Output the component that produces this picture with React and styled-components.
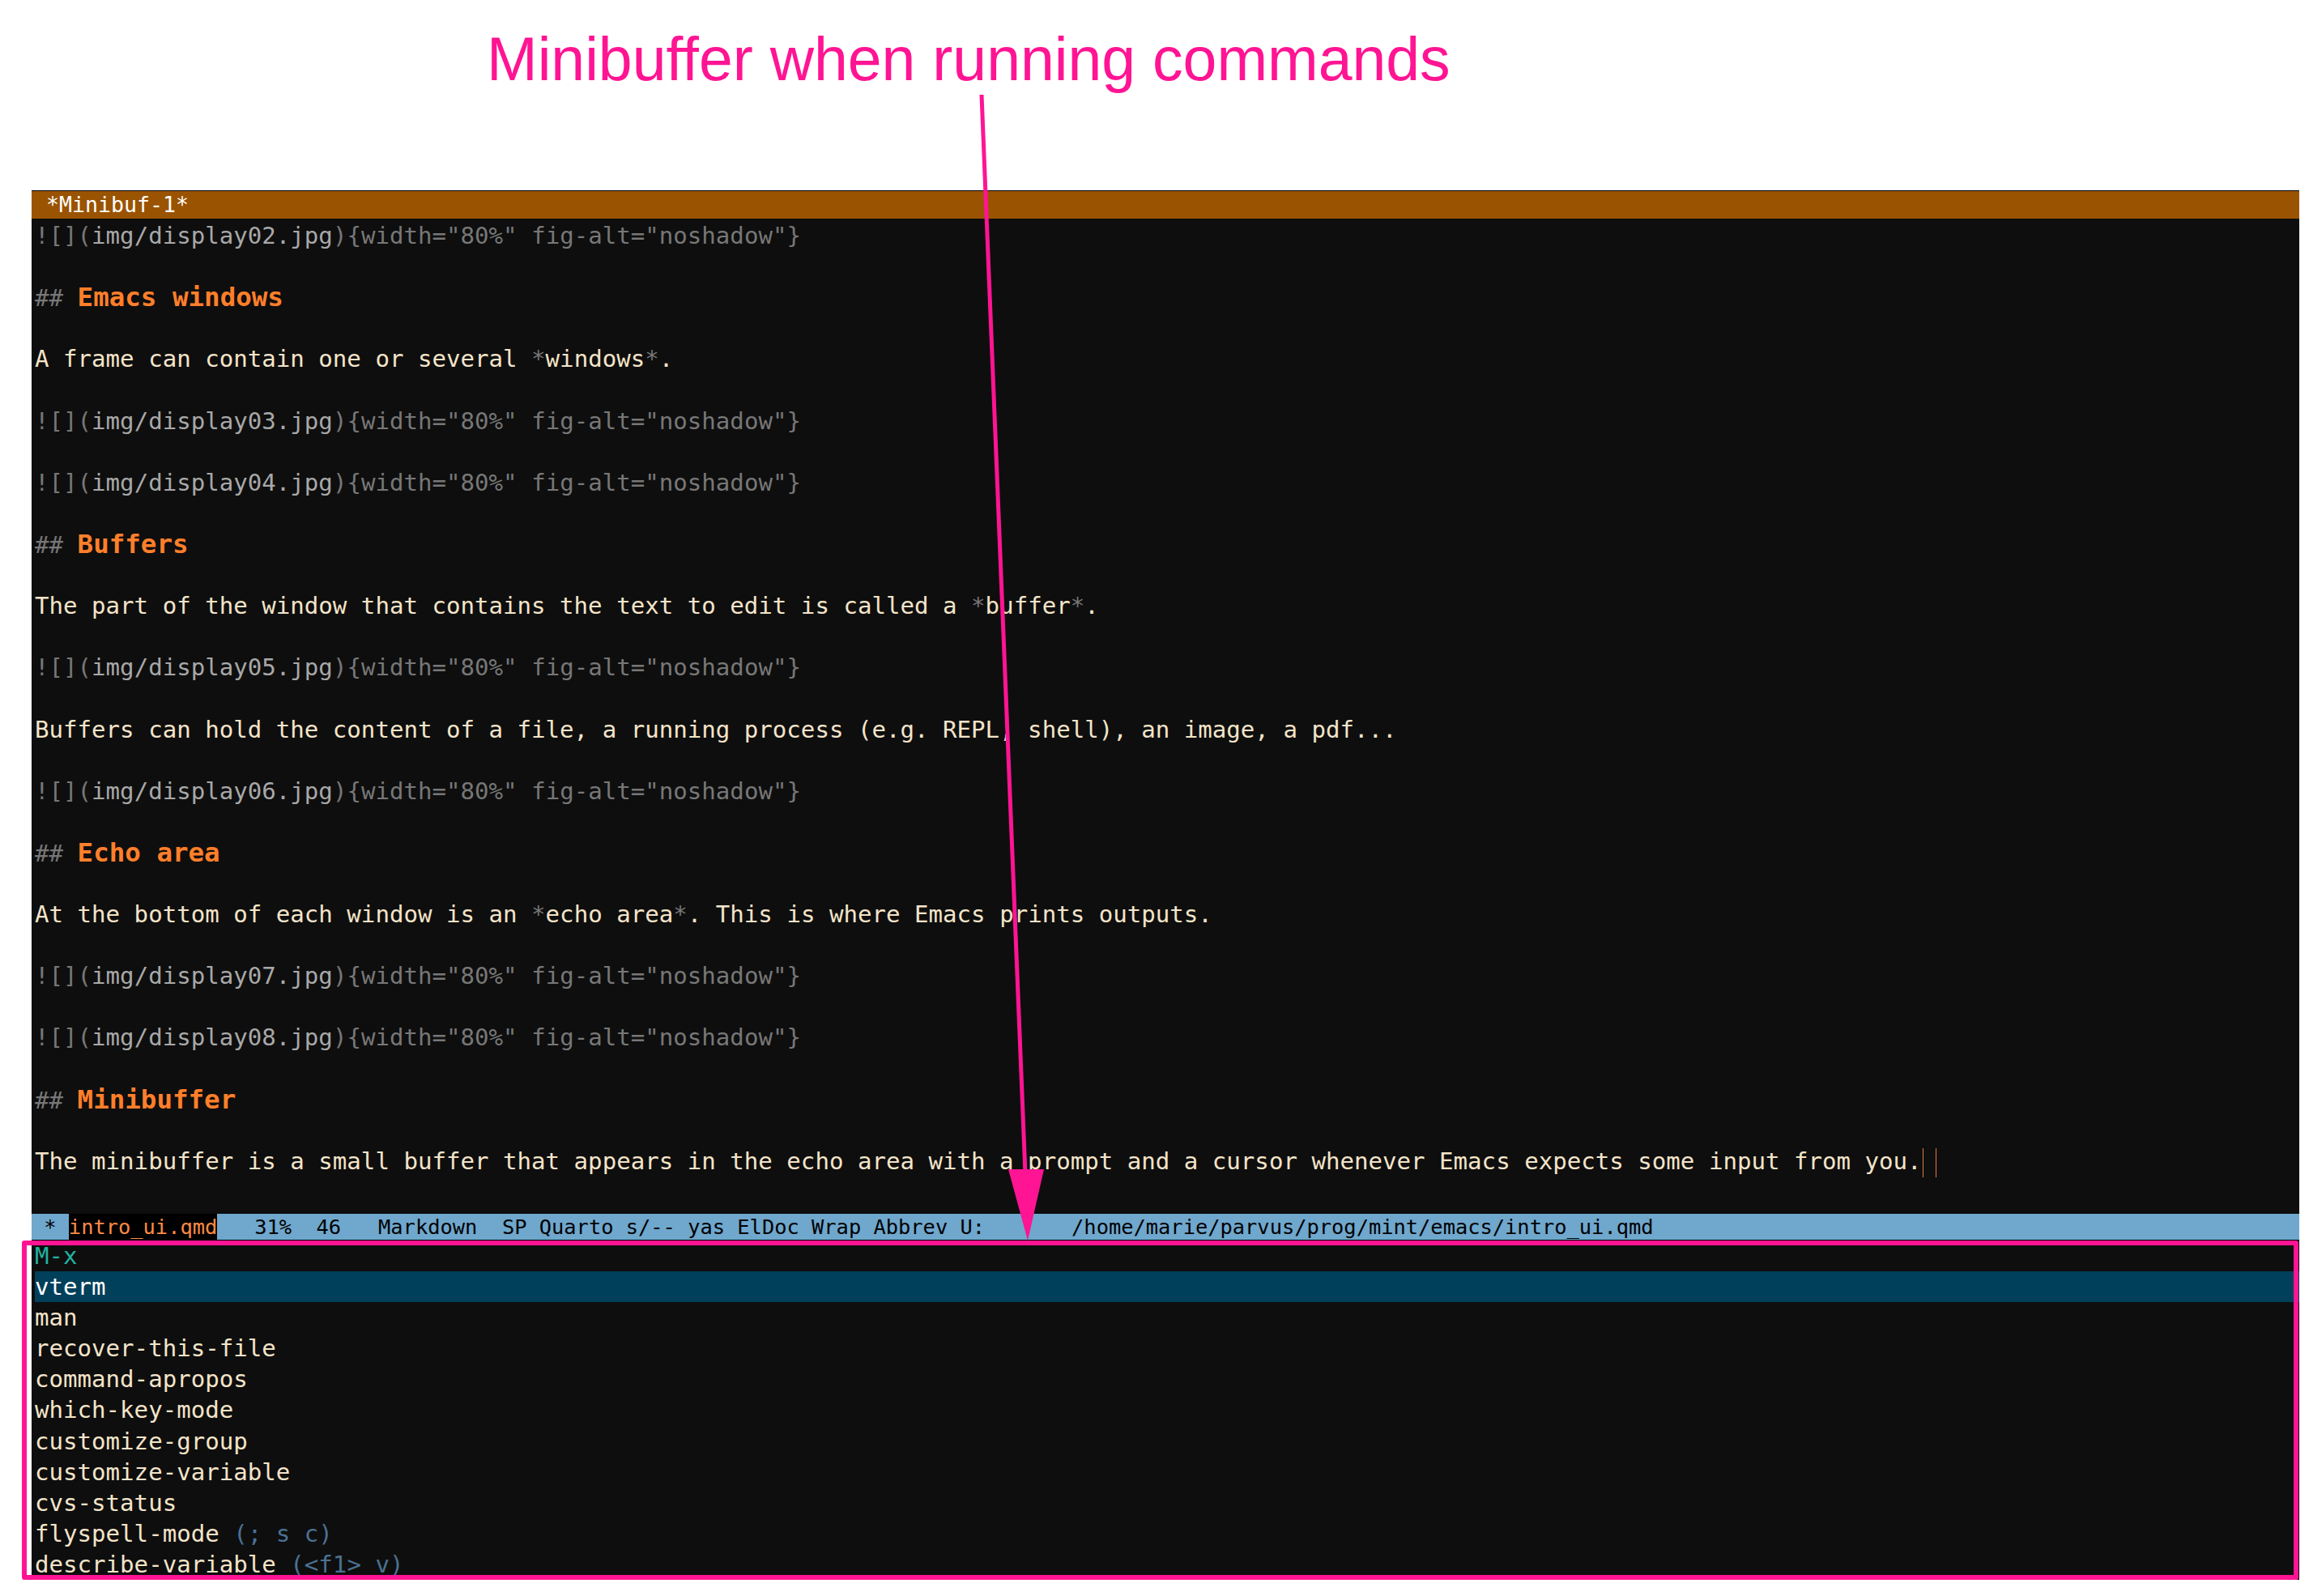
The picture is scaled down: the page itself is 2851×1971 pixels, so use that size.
import React from 'react';
import styled, { createGlobalStyle } from 'styled-components';

const GlobalStyle = createGlobalStyle`
  html, body {
    margin: 0;
    padding: 0;
    background: #ffffff;
  }
`;

const PINK = '#ff1493';
const MONO = '"DejaVu Sans Mono", "Liberation Mono", monospace';

const Page = styled.div`
  position: relative;
  width: 2851px;
  height: 1971px;
  background: #ffffff;
  overflow: hidden;
`;

const Caption = styled.div`
  box-sizing: border-box;
  height: 235px;
  padding: 36px 0 0 601px;
  font-family: "Liberation Sans", Arial, sans-serif;
  font-size: 75.2px;
  line-height: 75px;
  color: ${PINK};
`;

const Frame = styled.div`
  margin-left: 39px;
  width: 2800px;
  background: #0e0e0e;
  border-top: 1px solid #000;
  display: flex;
  flex-direction: column;
  font-family: ${MONO};
`;

const HeaderLine = styled.div`
  height: 34px;
  line-height: 34px;
  padding-left: 2px;
  background: #9a5300;
  color: #ffffff;
  font-size: 26.6px;
  white-space: pre;
`;

const Buffer = styled.div`
  box-sizing: border-box;
  height: 1229px;
  overflow: hidden;
  padding: 2px 0 0 4px;
  font-size: 29.1px;
`;

const Line = styled.div`
  height: 38.1px;
  line-height: 38.1px;
  white-space: pre;
  color: #f4e4c9;
`;

const Dim = styled.span`
  color: #777777;
`;

const Path = styled.span`
  color: #a8a8a8;
`;

const Heading = styled.span`
  color: #ff7f2a;
  font-weight: bold;
  font-size: 32.5px;
`;

const Cursor = styled.span`
  display: inline-block;
  box-sizing: border-box;
  width: 17px;
  height: 36px;
  vertical-align: middle;
  margin-left: 1px;
  border-left: 1px solid #e07a40;
  border-right: 1px solid #e07a40;
`;

const ModeLine = styled.div`
  height: 32px;
  line-height: 32px;
  background: #6fa7cd;
  color: #000;
  font-size: 25.4px;
  white-space: pre;
  border-bottom: 1px solid #000;
`;

const BufferName = styled.span`
  display: inline-block;
  background: #000;
  color: #ff8a45;
`;

const Minibuffer = styled.div`
  padding-left: 4px;
  height: 419px;
  font-size: 29.1px;
`;

const Row = styled.div`
  height: 38.1px;
  line-height: 38.1px;
  white-space: pre;
  color: ${(p) => (p.$selected ? '#ffffff' : '#f4e4c9')};
  background: ${(p) => (p.$selected ? '#00405b' : 'transparent')};
`;

const Prompt = styled.span`
  color: #22b2a0;
`;

const KeyHint = styled.span`
  color: #4b7193;
`;

const Highlight = styled.div`
  position: absolute;
  left: 27px;
  top: 1532px;
  width: 2811px;
  height: 419px;
  box-sizing: border-box;
  border: 6px solid ${PINK};
  border-radius: 3px;
  pointer-events: none;
`;

const ArrowLayer = styled.svg`
  position: absolute;
  left: 0;
  top: 0;
  pointer-events: none;
`;

const imgLine = (n) => (
  <>
    <Dim>![](</Dim>
    <Path>img/display{n}.jpg</Path>
    <Dim>){'{'}width="80%" fig-alt="noshadow"{'}'}</Dim>
  </>
);

const heading = (t) => (
  <>
    <Dim>## </Dim>
    <Heading>{t}</Heading>
  </>
);

const bodyLines = [
  imgLine('02'),
  null,
  heading('Emacs windows'),
  null,
  <>A frame can contain one or several <Dim>*</Dim>windows<Dim>*</Dim>.</>,
  null,
  imgLine('03'),
  null,
  imgLine('04'),
  null,
  heading('Buffers'),
  null,
  <>The part of the window that contains the text to edit is called a <Dim>*</Dim>buffer<Dim>*</Dim>.</>,
  null,
  imgLine('05'),
  null,
  <>Buffers can hold the content of a file, a running process (e.g. REPL, shell), an image, a pdf...</>,
  null,
  imgLine('06'),
  null,
  heading('Echo area'),
  null,
  <>At the bottom of each window is an <Dim>*</Dim>echo area<Dim>*</Dim>. This is where Emacs prints outputs.</>,
  null,
  imgLine('07'),
  null,
  imgLine('08'),
  null,
  heading('Minibuffer'),
  null,
  <>The minibuffer is a small buffer that appears in the echo area with a prompt and a cursor whenever Emacs expects some input from you.<Cursor /></>,
];

const candidates = [
  { name: 'vterm', selected: true },
  { name: 'man' },
  { name: 'recover-this-file' },
  { name: 'command-apropos' },
  { name: 'which-key-mode' },
  { name: 'customize-group' },
  { name: 'customize-variable' },
  { name: 'cvs-status' },
  { name: 'flyspell-mode', key: '(; s c)' },
  { name: 'describe-variable', key: '(<f1> v)' },
];

const App = () => {
  return (
    <Page>
      <GlobalStyle />
      <Caption>Minibuffer when running commands</Caption>
      <Frame>
        <HeaderLine> *Minibuf-1*</HeaderLine>
        <Buffer>
          {bodyLines.map((l, i) => (
            <Line key={i}>{l || ' '}</Line>
          ))}
        </Buffer>
        <ModeLine>
          {' * '}
          <BufferName>intro_ui.qmd</BufferName>
          {'   31%  46   Markdown  SP Quarto s/-- yas ElDoc Wrap Abbrev U:       /home/marie/parvus/prog/mint/emacs/intro_ui.qmd'}
        </ModeLine>
        <Minibuffer>
          <Row>
            <Prompt>M-x</Prompt>
          </Row>
          {candidates.map((c) => (
            <Row key={c.name} $selected={c.selected}>
              {c.name}
              {c.key && <KeyHint> {c.key}</KeyHint>}
            </Row>
          ))}
        </Minibuffer>
      </Frame>
      <Highlight />
      <ArrowLayer width="2851" height="1971" viewBox="0 0 2851 1971">
        <line x1="1212" y1="117" x2="1266" y2="1450" stroke={PINK} strokeWidth="5" />
        <polygon points="1245,1444 1289,1444 1269,1532" fill={PINK} />
      </ArrowLayer>
    </Page>
  );
};

export default App;
